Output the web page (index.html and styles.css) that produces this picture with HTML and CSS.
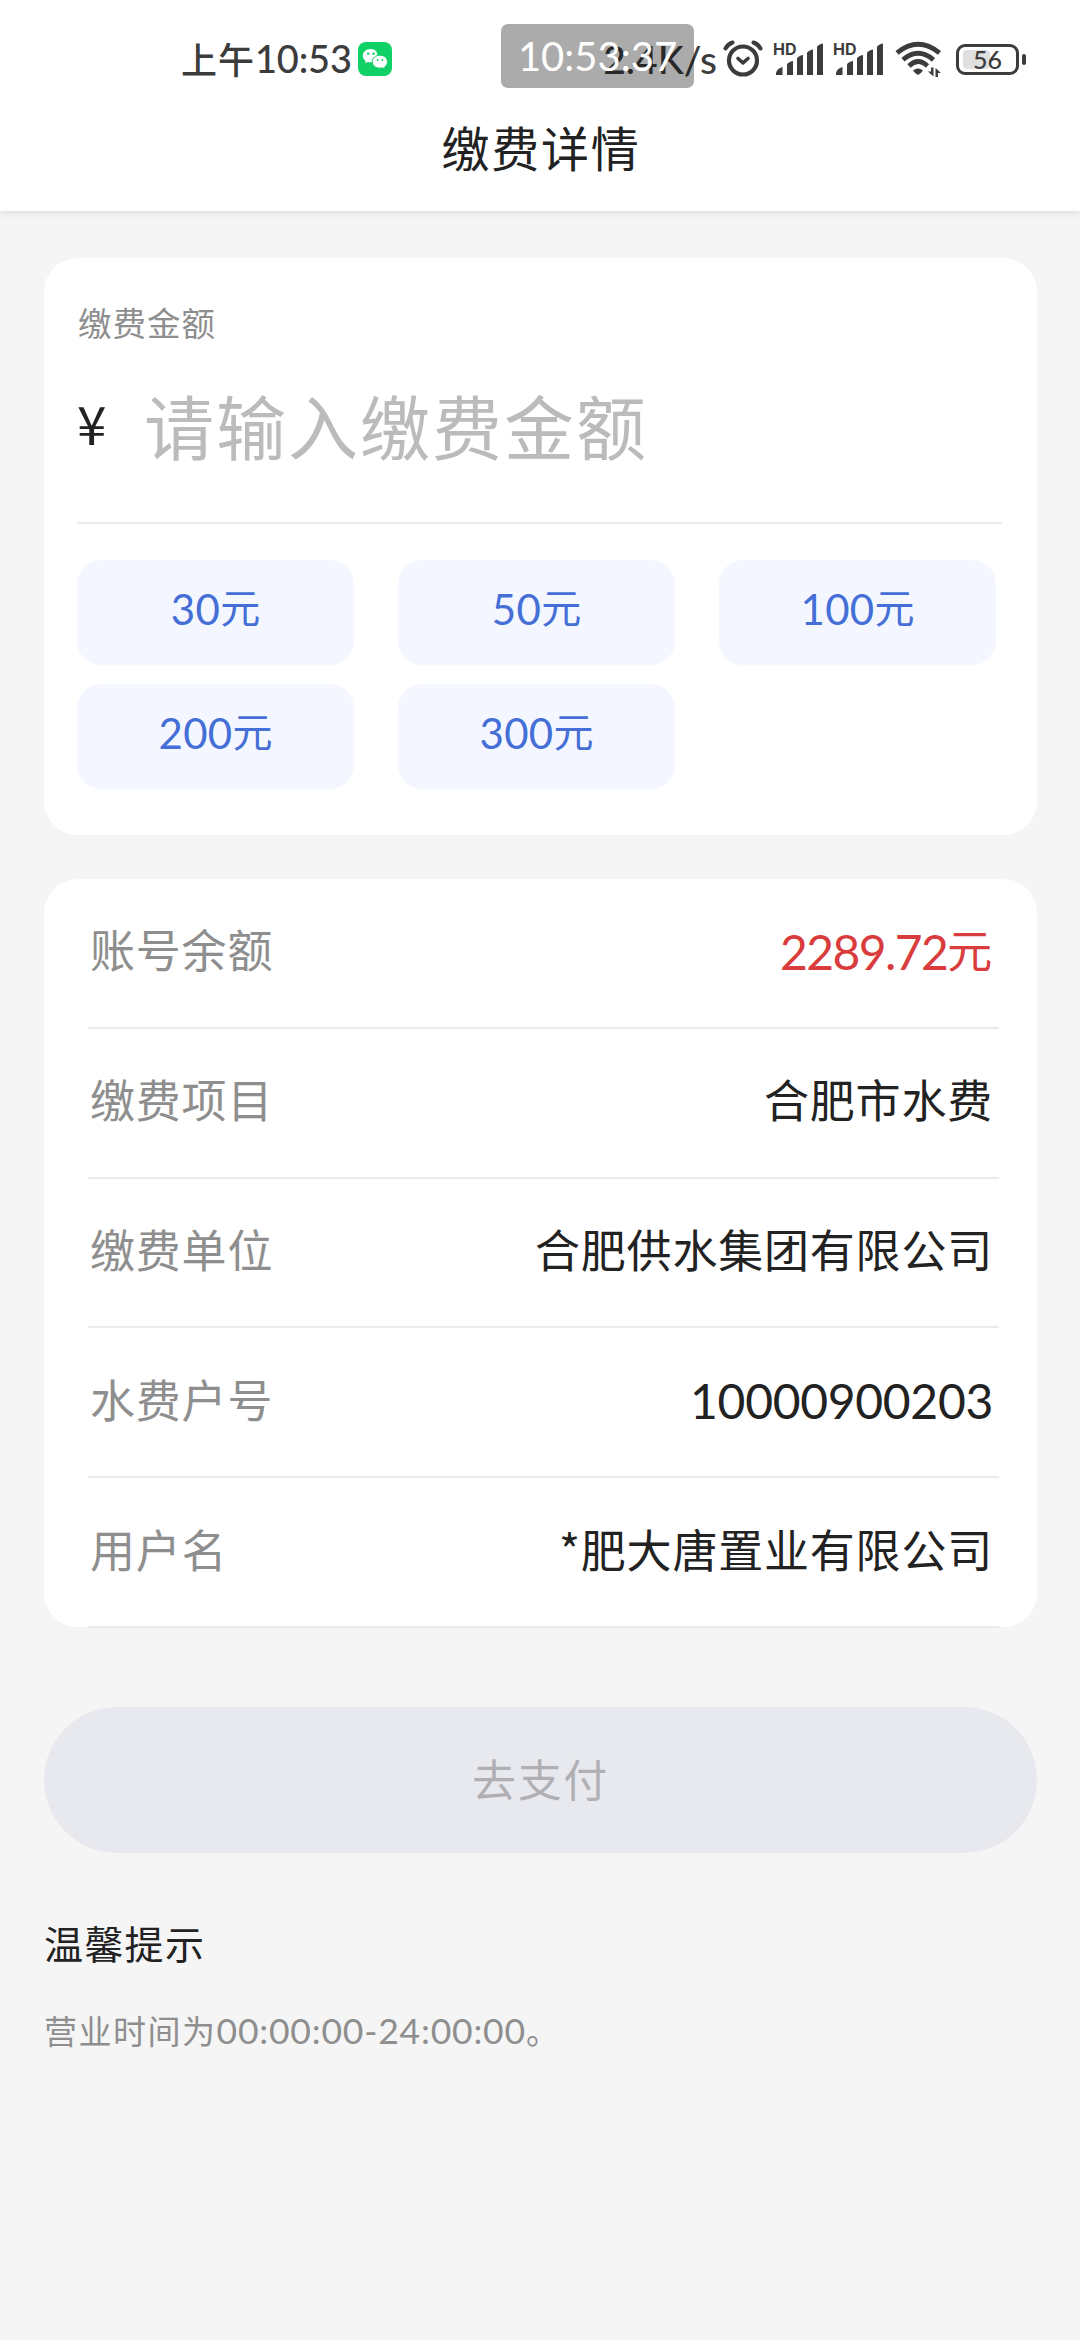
FILE: index.html
```html
<!DOCTYPE html>
<html lang="zh-CN">
<head>
    <meta charset="UTF-8">
    <meta name="viewport" content="width=device-width, initial-scale=1.0">
    <title>缴费详情</title>
    <link rel="stylesheet" href="styles.css">
</head>
<body>

<header class="header">
    <!-- Status bar -->
    <div class="status-bar">
        <div class="status-left">
            <span class="status-time">上午<span class="num">10:53</span></span>
            <svg class="wechat" viewBox="0 0 34 34">
                <rect width="34" height="34" rx="8" fill="#0fd166"/>
                <path d="M12.6 7C8 7 4.8 10 4.8 13.7c0 2.1 1.1 4 2.9 5.200l-.6 2.400 2.800-1.400c1.700.5 3.500.5 4.800.1 7.200-3.200 6-13-2.100-13z" fill="#fff"/>
                <path d="M22 13.200c-4.400 0-7.800 2.900-7.800 6.500s3.400 6.500 7.800 6.500c.9 0 1.800-.1 2.600-.4l2.600 1.300-.6-2.100c1.800-1.300 2.900-3.200 2.900-5.300 0-3.600-3.300-6.500-7.500-6.500z" fill="#fff" stroke="#0fd166" stroke-width="1"/>
                <g fill="#0fd166">
                    <circle cx="10.200" cy="11.800" r="1.200"/>
                    <circle cx="15.600" cy="11.800" r="1.200"/>
                    <circle cx="19.600" cy="17.900" r="1"/>
                    <circle cx="24.400" cy="17.900" r="1"/>
                </g>
            </svg>
        </div>

        <div class="status-right">
            <span class="speed num">2.4K/s</span>
            <svg class="alarm" viewBox="0 0 40 38" fill="none" stroke="#3c3c3c" stroke-linecap="round">
                <circle cx="20" cy="20.500" r="14" stroke-width="4.200"/>
                <path d="M2.500 8.500Q5 4 9.500 2.500M30.500 2.500Q35 4 37.500 8.500" stroke-width="4"/>
                <path d="M15 18.500l5 4.300 5-4.300" stroke-width="3.600" stroke-linejoin="round"/>
            </svg>
            <svg class="signal" viewBox="0 0 50 34">
                <text x="-1" y="12.500" class="hd">HD</text>
                <path d="M2 33V31Q3 26.500 8.500 25V33zM13 33V22.500Q14 20 19 19V33zM23 33V16.500Q24 14 29 13V33zM33 33V11Q34 8.500 39 7.500V33zM43 33V5Q44 2.500 49 1.500V33z" fill="#3c3c3c"/>
            </svg>
            <svg class="signal" viewBox="0 0 50 34">
                <text x="-1" y="12.500" class="hd">HD</text>
                <path d="M2 33V31Q3 26.500 8.500 25V33zM13 33V22.500Q14 20 19 19V33zM23 33V16.500Q24 14 29 13V33zM33 33V11Q34 8.500 39 7.500V33zM43 33V5Q44 2.500 49 1.500V33z" fill="#3c3c3c"/>
            </svg>
            <svg class="wifi" viewBox="0 0 48 36">
                <g fill="none" stroke="#3c3c3c" stroke-width="4.800">
                    <path d="M2 11.800Q23 -5.500 44.500 11.800"/>
                    <path d="M8 18.800Q23 5.800 38.500 18.800"/>
                    <path d="M14 25Q23 16 32.500 25"/>
                </g>
                <path d="M18 29.500Q23 25.500 28 29.500Q26 32.500 23 34Q20 32.500 18 29.500z" fill="#3c3c3c"/>
                <path d="M38.500 26.500V35.500L33 30.500H36V26.500zM40.500 36V27L46 32H43V36z" fill="#3c3c3c"/>
            </svg>
            <div class="battery"><span class="battery-fill"></span><span class="battery-text">56</span></div>
        </div>

        <div class="clock-overlay">10:53:37</div>
    </div>
    <h1 class="title">缴费详情</h1>
</header>

<main class="content">
    <!-- Amount -->
    <section class="card amount-card">
        <div class="amount-label">缴费金额</div>
        <div class="amount-row">
            <span class="yen">¥</span>
            <span class="placeholder">请输入缴费金额</span>
        </div>
        <div class="amounts">
            <button class="amount"><span class="num">30</span><span class="unit">元</span></button>
            <button class="amount"><span class="num">50</span><span class="unit">元</span></button>
            <button class="amount"><span class="num">100</span><span class="unit">元</span></button>
            <button class="amount"><span class="num">200</span><span class="unit">元</span></button>
            <button class="amount"><span class="num">300</span><span class="unit">元</span></button>
        </div>
    </section>

    <!-- Account info -->
    <section class="card info-card">
        <div class="row">
            <span class="row-label">账号余额</span>
            <span class="row-value balance"><span class="num">2289.72</span>元</span>
        </div>
        <div class="row">
            <span class="row-label">缴费项目</span>
            <span class="row-value">合肥市水费</span>
        </div>
        <div class="row">
            <span class="row-label">缴费单位</span>
            <span class="row-value">合肥供水集团有限公司</span>
        </div>
        <div class="row">
            <span class="row-label">水费户号</span>
            <span class="row-value"><span class="num account">10000900203</span></span>
        </div>
        <div class="row">
            <span class="row-label">用户名</span>
            <span class="row-value"><span class="star">*</span>肥大唐置业有限公司</span>
        </div>
    </section>

    <button class="pay-button">去支付</button>

    <h2 class="tips-title">温馨提示</h2>
    <p class="tips-text">营业时间为<span class="num">00:00:00-24:00:00</span>。</p>
</main>

</body>
</html>
```
FILE: styles.css
```css
* {
    box-sizing: border-box;
}
body {
    margin: 0;
    width: 1080px;
    min-height: 2340px;
    background-color: #f5f5f5;
    font-family: "Noto Sans CJK SC", sans-serif;
    color: #222;
}
button {
    border: none;
    padding: 0;
    font-family: inherit;
}
.num {
    font-family: Lato, "Noto Sans CJK SC", sans-serif;
}

/* Header */
.header {
    height: 211px;
    background-color: #fff;
    box-shadow: 0 1px 8px rgba(0, 0, 0, 0.12);
}
.status-bar {
    position: relative;
    display: flex;
    justify-content: space-between;
    height: 115px;
    padding: 0 55px 0 181px;
    color: #3c3c3c;
}
.status-left,
.status-right {
    display: flex;
    align-items: center;
    height: 118px;
}
.status-time {
    display: flex;
    align-items: center;
    padding-bottom: 3px;
    font-size: 36px;
    font-weight: 500;
    letter-spacing: 1px;
    line-height: 54px;
}
.status-time .num {
    padding-top: 1px;
    font-size: 38px;
    letter-spacing: -0.200px;
}
.wechat {
    width: 34px;
    height: 34px;
    margin-left: 6px;
}
.speed {
    font-size: 39px;
    font-weight: 500;
    line-height: 54px;
}
.alarm {
    width: 40px;
    height: 38px;
    margin-left: 6px;
}
.signal {
    width: 50px;
    height: 34px;
    margin-left: 11px;
    overflow: visible;
}
.signal + .signal {
    margin-left: 10px;
}
.hd {
    font: bold 16px Inter, sans-serif;
    fill: #3c3c3c;
}
.wifi {
    width: 48px;
    height: 36px;
    margin-left: 11px;
}
.battery {
    position: relative;
    width: 63px;
    height: 31px;
    margin: 0 6px 0 13px;
    border: 3px solid #3c3c3c;
    border-radius: 9px;
    text-align: center;
}
.battery::after {
    content: "";
    position: absolute;
    top: 7px;
    right: -10px;
    width: 4px;
    height: 11px;
    border-radius: 2px;
    background-color: #3c3c3c;
}
.battery-fill {
    position: absolute;
    top: 3px;
    left: 4px;
    width: 27px;
    height: 19px;
    border-radius: 4px;
    background-color: #e0e0e0;
}
.battery-text {
    position: relative;
    display: block;
    font-family: Lato, sans-serif;
    font-size: 25px;
    font-weight: 500;
    line-height: 25px;
}
.clock-overlay {
    position: absolute;
    left: 501px;
    top: 24px;
    width: 193px;
    height: 64px;
    border-radius: 7px;
    background-color: rgba(0, 0, 0, 0.33);
    color: #fff;
    font-family: Lato, sans-serif;
    font-size: 40px;
    line-height: 65px;
    text-align: center;
}
.title {
    margin: 0;
    padding-left: 2px;
    font-size: 48px;
    font-weight: 400;
    letter-spacing: 1.700px;
    line-height: 62px;
    text-align: center;
}

/* Cards */
.content {
    padding: 47px 43px 0 44px;
}
.card {
    background-color: #fff;
    border-radius: 34px;
}
.amount-card {
    height: 577px;
    padding: 40px 35px 0 33px;
}
.amount-label {
    padding-left: 1px;
    color: #8e8e8e;
    font-size: 33.500px;
    letter-spacing: 1px;
    line-height: 48px;
}
.amount-row {
    display: flex;
    align-items: center;
    height: 178px;
    padding-bottom: 19px;
    border-bottom: 2px solid #ebebeb;
}
.yen {
    width: 67px;
    padding: 0 0 6px 0;
    font-size: 53px;
    line-height: 80px;
}
.placeholder {
    color: #bbb;
    font-size: 70px;
    letter-spacing: 2px;
    line-height: 100px;
}
.amounts {
    display: grid;
    grid-template-columns: repeat(3, 277px);
    gap: 19px 44px;
    padding-top: 36px;
}
.amount {
    display: flex;
    justify-content: center;
    align-items: center;
    height: 105px;
    padding-bottom: 7px;
    border-radius: 24px;
    background-color: #f4f7ff;
    color: #456fd6;
    font-size: 40px;
}
.amount .num {
    font-size: 42px;
    letter-spacing: 0.300px;
}
.unit {
    padding-bottom: 6px;
}

/* Info list */
.info-card {
    height: 748px;
    margin-top: 44px;
    padding: 0 38px 0 44px;
}
.row {
    display: flex;
    justify-content: space-between;
    align-items: center;
    height: 149.800px;
    padding: 0 6px 7px 2px;
    border-bottom: 2px solid #ebebeb;
    font-size: 45px;
    letter-spacing: 0.800px;
    line-height: 64px;
}
.row-label {
    color: #8e8e8e;
}
.row-value {
    display: flex;
    align-items: center;
}
.row .num {
    padding-top: 5px;
    font-size: 48px;
    letter-spacing: -1.600px;
}
.row .account {
    letter-spacing: -0.300px;
}
.balance {
    color: #d93c3c;
}

/* Pay button and tips */
.pay-button {
    display: block;
    width: 100%;
    height: 146px;
    margin-top: 80px;
    padding-bottom: 5px;
    border-radius: 73px;
    background-color: #e8e9ee;
    color: #b0b0b4;
    font-size: 44px;
    letter-spacing: 1.600px;
}
.tips-title {
    margin: 61px 0 0;
    font-size: 39px;
    font-weight: 400;
    letter-spacing: 1.300px;
    line-height: 56px;
}
.tips-text {
    display: flex;
    align-items: center;
    margin: 35px 0 0;
    color: #8e8e8e;
    font-size: 33px;
    letter-spacing: 1.500px;
    line-height: 48px;
}
.tips-text .num {
    padding-top: 2px;
    font-size: 35.500px;
    letter-spacing: 0.800px;
}
```
